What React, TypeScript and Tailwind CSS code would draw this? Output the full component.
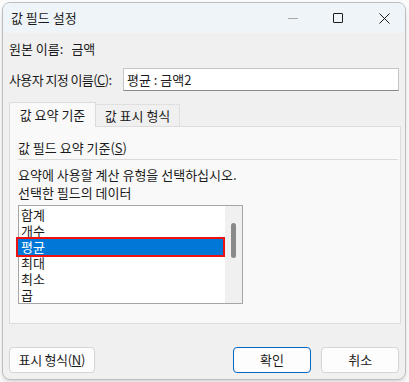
import React from 'react';

const items = ['합계', '개수', '평균', '최대', '최소', '곱'];

const font = "font-['Malgun_Gothic','Noto_Sans_CJK_KR',sans-serif]";

export default function App() {
  return (
    <div className={`w-[409px] h-[382px] bg-[#fafafa] overflow-hidden ${font} text-[13px] text-[#1b1b1b]`}>
      <div className="ml-[2px] mt-[2px] w-[404px] h-[378px] flex flex-col rounded-lg border border-[#bdbdbd] bg-[#f0f0f0] overflow-hidden shadow-md">
        {/* 제목 표시줄 */}
        <div className="h-[30px] shrink-0 flex items-center bg-[#eef4f8] pl-[8px]">
          <span className="leading-[16px]">값 필드 설정</span>
          <div className="ml-auto flex items-center h-full">
            <div className="w-[10px] h-px bg-[#a8a8a8] mr-[35px]" />
            <div className="w-[10px] h-[10px] border border-[#1b1b1b] rounded-[1px] mr-[36px]" />
            <svg width="11" height="11" viewBox="0 0 11 11" className="mr-[15px]">
              <path d="M0.5 0.5 L10.5 10.5 M10.5 0.5 L0.5 10.5" stroke="#1b1b1b" strokeWidth="1" />
            </svg>
          </div>
        </div>

        {/* 본문 */}
        <div className="flex flex-col px-[6px]">
          <div className="mt-[8px] leading-[16px]">
            원본 이름:<span className="ml-[8px]">금액</span>
          </div>

          <div className="mt-[11px] flex items-center h-[23px]">
            <span className="leading-[16px] tracking-[-0.6px]">
              사용자 지정 이름(<span className="underline">C</span>):
            </span>
            <div className="ml-auto w-[276px] h-[23px] bg-white border border-[#c6c6c6] border-b-[#8a8a8a] flex items-center pl-[3px] leading-[16px]">
              평균 : 금액2
            </div>
          </div>

          {/* 탭 */}
          <div className="mt-[11px] flex items-end">
            <div className="h-[25px] w-[87px] bg-[#f9f9f9] border border-b-0 border-[#dcdcdc] flex items-center justify-center leading-[16px] relative z-10 -mb-px">
              값 요약 기준
            </div>
            <div className="h-[22px] w-[84px] bg-[#f0f0f0] border border-l-0 border-b-0 border-[#e0e0e0] flex items-center justify-center leading-[16px]">
              값 표시 형식
            </div>
          </div>
          <div className="w-[392px] h-[198px] bg-[#f9f9f9] border border-[#dcdcdc] flex flex-col pl-[8px] pr-[2px]">
            <div className="mt-[13px] leading-[16px]">
              값 필드 요약 기준(<span className="underline">S</span>)
            </div>
            <div className="mt-[3px] h-px bg-[#dadada]" />
            <div className="mt-[6px] leading-[18px]">요약에 사용할 계산 유형을 선택하십시오.</div>
            <div className="leading-[18px]">선택한 필드의 데이터</div>

            {/* 목록 */}
            <div className="mt-[3px] w-[225px] h-[99px] bg-white border border-[#a6a6a6] flex">
              <div className="flex-1 flex flex-col pt-px">
                {items.map((it) => (
                  <div
                    key={it}
                    className={
                      it === '평균'
                        ? 'h-[16px] leading-[16px] pl-[3px] bg-[#0078d7] text-white outline-2 outline-[#ee1111] -ml-px mr-[2px]'
                        : 'h-[16px] leading-[16px] pl-[2px]'
                    }
                  >
                    {it}
                  </div>
                ))}
              </div>
              <div className="w-[17px] h-full bg-[#f0f0f0] flex justify-center pt-[17px]">
                <div className="w-[5px] h-[35px] rounded-full bg-[#8a8a8a]" />
              </div>
            </div>
          </div>

          {/* 버튼 */}
          <div className="mt-[23px] flex items-center">
            <button className="w-[87px] h-[26px] bg-[#fdfdfd] border border-[#d4d4d4] rounded-[4px] leading-[16px] text-[13px] tracking-[-0.3px]">
              표시 형식(<span className="underline">N</span>)
            </button>
            <button className="ml-[138px] w-[80px] h-[26px] bg-[#fdfdfd] border border-[#0067c0] rounded-[4px] leading-[16px] text-[13px]">
              확인
            </button>
            <button className="ml-[10px] w-[79px] h-[26px] bg-[#fdfdfd] border border-[#d4d4d4] rounded-[4px] leading-[16px] text-[13px]">
              취소
            </button>
          </div>
        </div>
      </div>
    </div>
  );
}
